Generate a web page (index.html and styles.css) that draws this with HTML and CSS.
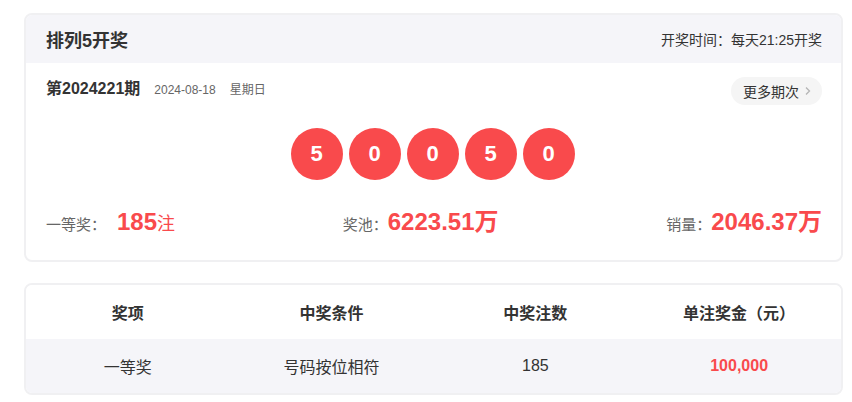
FILE: index.html
```html
<!DOCTYPE html>
<html lang="zh-CN">
<head>
<meta charset="utf-8">
<title>排列5开奖</title>
<link rel="stylesheet" href="styles.css">
</head>
<body>
<div class="page">
  <section class="card draw">
    <header class="draw-head">
      <h1 class="title">排列5开奖</h1>
      <span class="time">开奖时间：每天21:25开奖</span>
    </header>
    <div class="draw-body">
      <div class="issue-row">
        <div class="issue">
          <span class="issue-no">第2024221期</span>
          <span class="issue-date">2024-08-18</span>
          <span class="issue-day">星期日</span>
        </div>
        <a class="more" href="#">更多期次<svg class="chev" width="8" height="10" viewBox="0 0 8 10"><path d="M2 1.5 L5.5 5 L2 8.5" fill="none" stroke="#b5b5b5" stroke-width="1.3"/></svg></a>
      </div>
      <div class="balls">
        <span class="ball">5</span>
        <span class="ball">0</span>
        <span class="ball">0</span>
        <span class="ball">5</span>
        <span class="ball">0</span>
      </div>
      <div class="stats">
        <div class="stat"><span class="label">一等奖：</span><span class="val first">185</span><span class="unit-s">注</span></div>
        <div class="stat"><span class="label">奖池：</span><span class="val">6223.51</span><span class="unit">万</span></div>
        <div class="stat"><span class="label">销量：</span><span class="val">2046.37</span><span class="unit">万</span></div>
      </div>
    </div>
  </section>

  <section class="card prize">
    <div class="trow thead">
      <div class="cell">奖项</div>
      <div class="cell">中奖条件</div>
      <div class="cell">中奖注数</div>
      <div class="cell">单注奖金（元）</div>
    </div>
    <div class="trow tdata">
      <div class="cell">一等奖</div>
      <div class="cell">号码按位相符</div>
      <div class="cell">185</div>
      <div class="cell money">100,000</div>
    </div>
  </section>
</div>
</body>
</html>
```

FILE: styles.css
```css
* { box-sizing: border-box; }
html, body { margin: 0; padding: 0; background: #fff; }
body {
  font-family: "Liberation Sans", "Noto Sans CJK SC", sans-serif;
  color: #333;
}
.page {
  padding: 13px 0 0 24px;
  width: 843px;
}
.card {
  border: 2px solid #f0f0f2;
  border-radius: 8px;
  overflow: hidden;
  background: #fff;
}
.draw-head {
  display: flex;
  justify-content: space-between;
  align-items: center;
  height: 48px;
  padding: 0 19px 0 20px;
  background: #f5f5f9;
}
.title {
  margin: 0;
  font-size: 18px;
  font-weight: bold;
  color: #333;
}
.time { font-size: 14px; color: #333; }

.draw-body { padding: 14px 19px 22px 20px; }
.issue-row {
  display: flex;
  justify-content: space-between;
  align-items: flex-start;
  height: 28px;
}
.issue { display: flex; align-items: baseline; margin-top: -2px; }
.issue-no { font-size: 16px; font-weight: bold; color: #333; }
.issue-date, .issue-day { font-size: 12px; color: #666; margin-left: 14px; }
.more {
  display: flex;
  align-items: center;
  gap: 5px;
  height: 28px;
  padding: 0 10px 0 12px;
  border-radius: 14px;
  background: #f5f5f5;
  font-size: 14px;
  color: #333;
  text-decoration: none;
}
.balls {
  display: flex;
  justify-content: center;
  gap: 6px;
  margin-top: 23px;
  padding-right: 3px;
}
.ball {
  width: 52px;
  height: 52px;
  border-radius: 50%;
  background: #f94a4c;
  color: #fff;
  font-size: 22px;
  font-weight: bold;
  display: flex;
  align-items: center;
  justify-content: center;
}
.stats {
  display: flex;
  justify-content: space-between;
  align-items: baseline;
  margin-top: 22px;
  height: 36px;
}
.stat { display: flex; align-items: baseline; }
.label { font-size: 15px; color: #666; }
.val { font-size: 24px; font-weight: bold; color: #f94a4c; }
.val.first { margin-left: 11px; }
.unit { font-size: 24px; font-weight: bold; color: #f94a4c; }
.unit-s { font-size: 18px; color: #f94a4c; }

.prize { margin-top: 21px; }
.trow {
  display: grid;
  grid-template-columns: repeat(4, 1fr);
  align-items: center;
  height: 54px;
  font-size: 16px;
}
.thead { font-weight: bold; background: #fff; }
.tdata { background: #f5f5f9; }
.cell { text-align: center; }
.money { color: #f94a4c; font-weight: bold; }
```
